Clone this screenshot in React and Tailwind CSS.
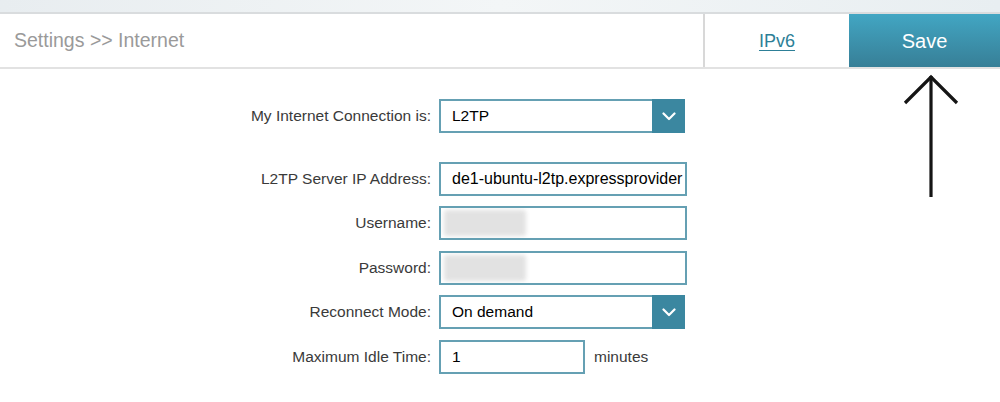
import React from "react";

const font = { fontFamily: '"Liberation Sans", Arial, sans-serif' };

const Chevron = () => (
  <svg width="14" height="9" viewBox="0 0 14 9" fill="none">
    <path d="M1.5 1.5 L7 7 L12.5 1.5" stroke="white" strokeWidth="2.2" strokeLinecap="round" strokeLinejoin="round" />
  </svg>
);

const Label = ({ children }) => (
  <div className="w-[432px] pr-[1px] text-right text-[15.5px] text-[#3a3a3a] shrink-0">{children}</div>
);

const Select = ({ value }) => (
  <div className="ml-[7px] flex h-[34px] w-[246px] items-stretch border-2 border-[#65a0b3] bg-white">
    <div className="flex flex-1 items-center pl-[11px] text-[15.5px] text-black">{value}</div>
    <div className="flex w-[33px] items-center justify-center bg-[#3b87a0] -my-[2px] -mr-[2px]">
      <Chevron />
    </div>
  </div>
);

const Field = ({ value, blurred, width = "w-[248px]", size = "text-[15.5px]" }) => (
  <div className={`ml-[7px] flex h-[34px] ${width} items-center overflow-hidden whitespace-nowrap border-2 border-[#65a0b3] bg-white pl-[11px] ${size} text-black`}>
    {blurred ? (
      <div className="-ml-[8px] h-[26px] w-[82px] rounded-[3px] bg-[#e2e2e2] blur-[2px]" />
    ) : (
      value
    )}
  </div>
);

const Row = ({ label, children, className = "" }) => (
  <div className={`flex items-center ${className}`}>
    <Label>{label}</Label>
    {children}
  </div>
);

export default function App() {
  return (
    <div className="relative h-[402px] w-[1000px] overflow-hidden bg-white" style={font}>
      <div className="h-[14px] bg-gradient-to-r from-[#e8edf0] via-[#f3f6f7] to-[#e8eef1] border-b-2 border-[#d9dcde]" />
      <div className="flex h-[55px] items-stretch border-b-2 border-[#e2e2e2]">
        <div className="flex flex-1 items-center pl-[14px] pt-[1px] text-[19.5px] text-[#9a9a9a]">Settings &gt;&gt; Internet</div>
        <div className="flex w-[146px] items-center justify-center border-l-2 border-[#d8d8d8] pt-[1px] text-[18px] text-[#2d7f97] underline underline-offset-[3px]">
          IPv6
        </div>
        <div className="flex w-[151px] items-center justify-center bg-gradient-to-b from-[#42a6c3] to-[#377f97] pt-[1px] text-[20px] text-white">
          Save
        </div>
      </div>

      <div className="flex flex-col gap-[10.5px] pt-[30px]">
        <Row label="My Internet Connection is:" className="mb-[18px]">
          <Select value="L2TP" />
        </Row>
        <Row label="L2TP Server IP Address:">
          <Field value="de1-ubuntu-l2tp.expressprovider" size="text-[16px]" />
        </Row>
        <Row label="Username:">
          <Field blurred />
        </Row>
        <Row label="Password:">
          <Field blurred />
        </Row>
        <Row label="Reconnect Mode:">
          <Select value="On demand" />
        </Row>
        <Row label="Maximum Idle Time:">
          <Field value="1" width="w-[146px]" />
          <span className="ml-[9px] text-[15.5px] text-[#3a3a3a]">minutes</span>
        </Row>
      </div>

      <svg className="absolute left-[900px] top-[72px]" width="62" height="128" viewBox="0 0 62 128" fill="none">
        <path d="M31 4 V125" stroke="#151515" strokeWidth="3.2" />
        <path d="M5 31 L31 5 L57 31" stroke="#151515" strokeWidth="3.2" />
      </svg>
    </div>
  );
}
